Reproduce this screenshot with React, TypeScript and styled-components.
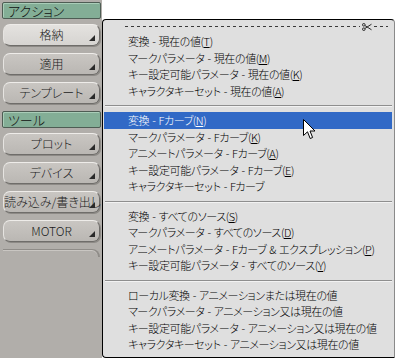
import React from 'react';
import styled, { createGlobalStyle } from 'styled-components';

const GlobalStyle = createGlobalStyle`
  html, body {
    margin: 0;
    padding: 0;
    background: #ffffff;
  }
  body {
    font-family: "Noto Sans CJK JP", "Noto Sans", sans-serif;
    font-size: 12px;
    overflow: hidden;
  }
  * {
    box-sizing: border-box;
  }
`;

const Screen = styled.div`
  width: 395px;
  height: 358px;
  display: flex;
  overflow: hidden;
  position: relative;
`;

const SidePanel = styled.aside`
  width: 102px;
  flex-shrink: 0;
  background: #b1aeaa;
  padding: 2px 1px 0 2px;
  display: flex;
  flex-direction: column;
`;

const SectionHeader = styled.div`
  height: 17px;
  margin-bottom: 5px;
  background: #83ae96;
  border: 1px solid #4e5d54;
  border-radius: 2px;
  box-shadow: inset 1px 1px 0 #a9cdb8;
  color: #111;
  font-size: 13px;
  font-weight: 300;
  line-height: 15px;
  padding-left: 5px;
  font-feature-settings: "palt";
`;

const PanelButton = styled.button<{ $pressed?: boolean }>`
  position: relative;
  height: 22px;
  margin: 0 1px 7px 1px;
  border: 1px solid;
  border-color: #eeece9 #6f6d6a #6f6d6a #e6e4e1;
  border-radius: 7px;
  background: ${p => p.$pressed
    ? 'linear-gradient(#e4e2df, #d6d4d1)'
    : 'linear-gradient(#c9c6c2, #bab7b3)'};
  box-shadow: 1px 1px 0 #8d8a86;
  font-family: inherit;
  font-size: 12px;
  font-weight: 300;
  color: #1a1a1a;
  padding: 0;
  line-height: 20px;
  text-align: center;
  font-feature-settings: "palt";
  white-space: nowrap;
  overflow: visible;
  cursor: default;

  &::after {
    content: '';
    position: absolute;
    right: 4px;
    bottom: 4px;
    width: 0;
    height: 0;
    border-style: solid;
    border-width: 0 0 6px 6px;
    border-color: transparent transparent #2a2a2a transparent;
  }
`;

const PanelStub = styled.div`
  height: 8px;
  margin: 0 1px 0 1px;
  border-top: 1px solid #8f8c88;
  border-right: 2px solid #8f8c88;
  border-top-right-radius: 8px;
  box-shadow: inset 0 1px 0 #c9c6c2;
`;

const MenuArea = styled.div`
  flex: 1;
  padding-top: 19px;
  display: flex;
  flex-direction: column;
`;

const Menu = styled.div`
  flex: 1;
  background: #dfdfdf;
  border: 1px solid #000;
  border-right-color: #8a8a8a;
  border-radius: 4px 4px 0 4px;
  display: flex;
  flex-direction: column;
  font-feature-settings: "palt";
`;

const TearOff = styled.div`
  height: 13px;
  display: flex;
  align-items: center;
  padding: 0 6px 0 22px;
  gap: 2px;
`;

const Dashes = styled.div<{ $grow?: boolean }>`
  height: 1px;
  flex: ${p => (p.$grow ? 1 : '0 0 14px')};
  background: repeating-linear-gradient(90deg, #3a3a3a 0 3px, transparent 3px 6px);
`;

const Separator = styled.div`
  height: 13px;
  display: flex;
  align-items: center;
  padding: 0 2px;

  &::before {
    content: '';
    flex: 1;
    height: 1px;
    background: #8e8e8e;
    box-shadow: 0 1px 0 #f2f2f2;
  }
`;

const Item = styled.div<{ $active?: boolean }>`
  height: 16.5px;
  line-height: 16.5px;
  padding-left: 24px;
  margin: 0 2px 0 1px;
  white-space: nowrap;
  color: ${p => (p.$active ? '#ffffff' : '#000000')};
  background: ${p => (p.$active ? '#3169c6' : 'transparent')};
  font-size: 11px;
  font-weight: 300;
  letter-spacing: -0.4px;
  word-spacing: 1px;

  u {
    text-underline-offset: 1px;
  }
`;

const Cursor = styled.svg`
  position: absolute;
  left: 303px;
  top: 119px;
`;

type Entry = { label: string; key?: string; active?: boolean };

const groups: Entry[][] = [
  [
    { label: '変換 - 現在の値', key: 'T' },
    { label: 'マークパラメータ - 現在の値', key: 'M' },
    { label: 'キー設定可能パラメータ - 現在の値', key: 'K' },
    { label: 'キャラクタキーセット - 現在の値', key: 'A' },
  ],
  [
    { label: '変換 - Fカーブ', key: 'N', active: true },
    { label: 'マークパラメータ - Fカーブ', key: 'K' },
    { label: 'アニメートパラメータ - Fカーブ', key: 'A' },
    { label: 'キー設定可能パラメータ - Fカーブ', key: 'E' },
    { label: 'キャラクタキーセット - Fカーブ' },
  ],
  [
    { label: '変換 - すべてのソース', key: 'S' },
    { label: 'マークパラメータ - すべてのソース', key: 'D' },
    { label: 'アニメートパラメータ - Fカーブ & エクスプレッション', key: 'P' },
    { label: 'キー設定可能パラメータ - すべてのソース', key: 'Y' },
  ],
  [
    { label: 'ローカル変換 - アニメーションまたは現在の値' },
    { label: 'マークパラメータ - アニメーション又は現在の値' },
    { label: 'キー設定可能パラメータ - アニメーション又は現在の値' },
    { label: 'キャラクタキーセット - アニメーション又は現在の値' },
  ],
];

const Scissors = () => (
  <svg width="10" height="8" viewBox="0 0 10 8">
    <circle cx="1.8" cy="1.8" r="1.3" fill="none" stroke="#2a2a2a" strokeWidth="1" />
    <circle cx="1.8" cy="6.2" r="1.3" fill="none" stroke="#2a2a2a" strokeWidth="1" />
    <path d="M3 2.6 L9.5 6.8 M3 5.4 L9.5 1.2" stroke="#2a2a2a" strokeWidth="1" />
  </svg>
);

const App: React.FC = () => {
  return (
    <>
      <GlobalStyle />
      <Screen>
        <SidePanel>
          <SectionHeader>アクション</SectionHeader>
          <PanelButton $pressed>格納</PanelButton>
          <PanelButton>適用</PanelButton>
          <PanelButton>テンプレート</PanelButton>
          <SectionHeader>ツール</SectionHeader>
          <PanelButton>プロット</PanelButton>
          <PanelButton>デバイス</PanelButton>
          <PanelButton>読み込み/書き出し</PanelButton>
          <PanelButton>MOTOR</PanelButton>
          <PanelStub />
        </SidePanel>

        <MenuArea>
          <Menu>
            <TearOff>
              <Dashes $grow />
              <Scissors />
              <Dashes />
            </TearOff>
            {groups.map((group, gi) => (
              <React.Fragment key={gi}>
                {gi > 0 && <Separator />}
                {group.map((entry, i) => (
                  <Item key={i} $active={entry.active}>
                    {entry.label}
                    {entry.key && (
                      <>
                        (<u>{entry.key}</u>)
                      </>
                    )}
                  </Item>
                ))}
              </React.Fragment>
            ))}
          </Menu>
        </MenuArea>

        <Cursor width="13" height="21" viewBox="0 0 13 21">
          <path
            d="M0.5 0.5 L0.5 16.5 L4.5 12.8 L7.2 19.5 L9.6 18.5 L7 12 L12 12 Z"
            fill="#ffffff"
            stroke="#000000"
            strokeWidth="1"
          />
        </Cursor>
      </Screen>
    </>
  );
};

export default App;
